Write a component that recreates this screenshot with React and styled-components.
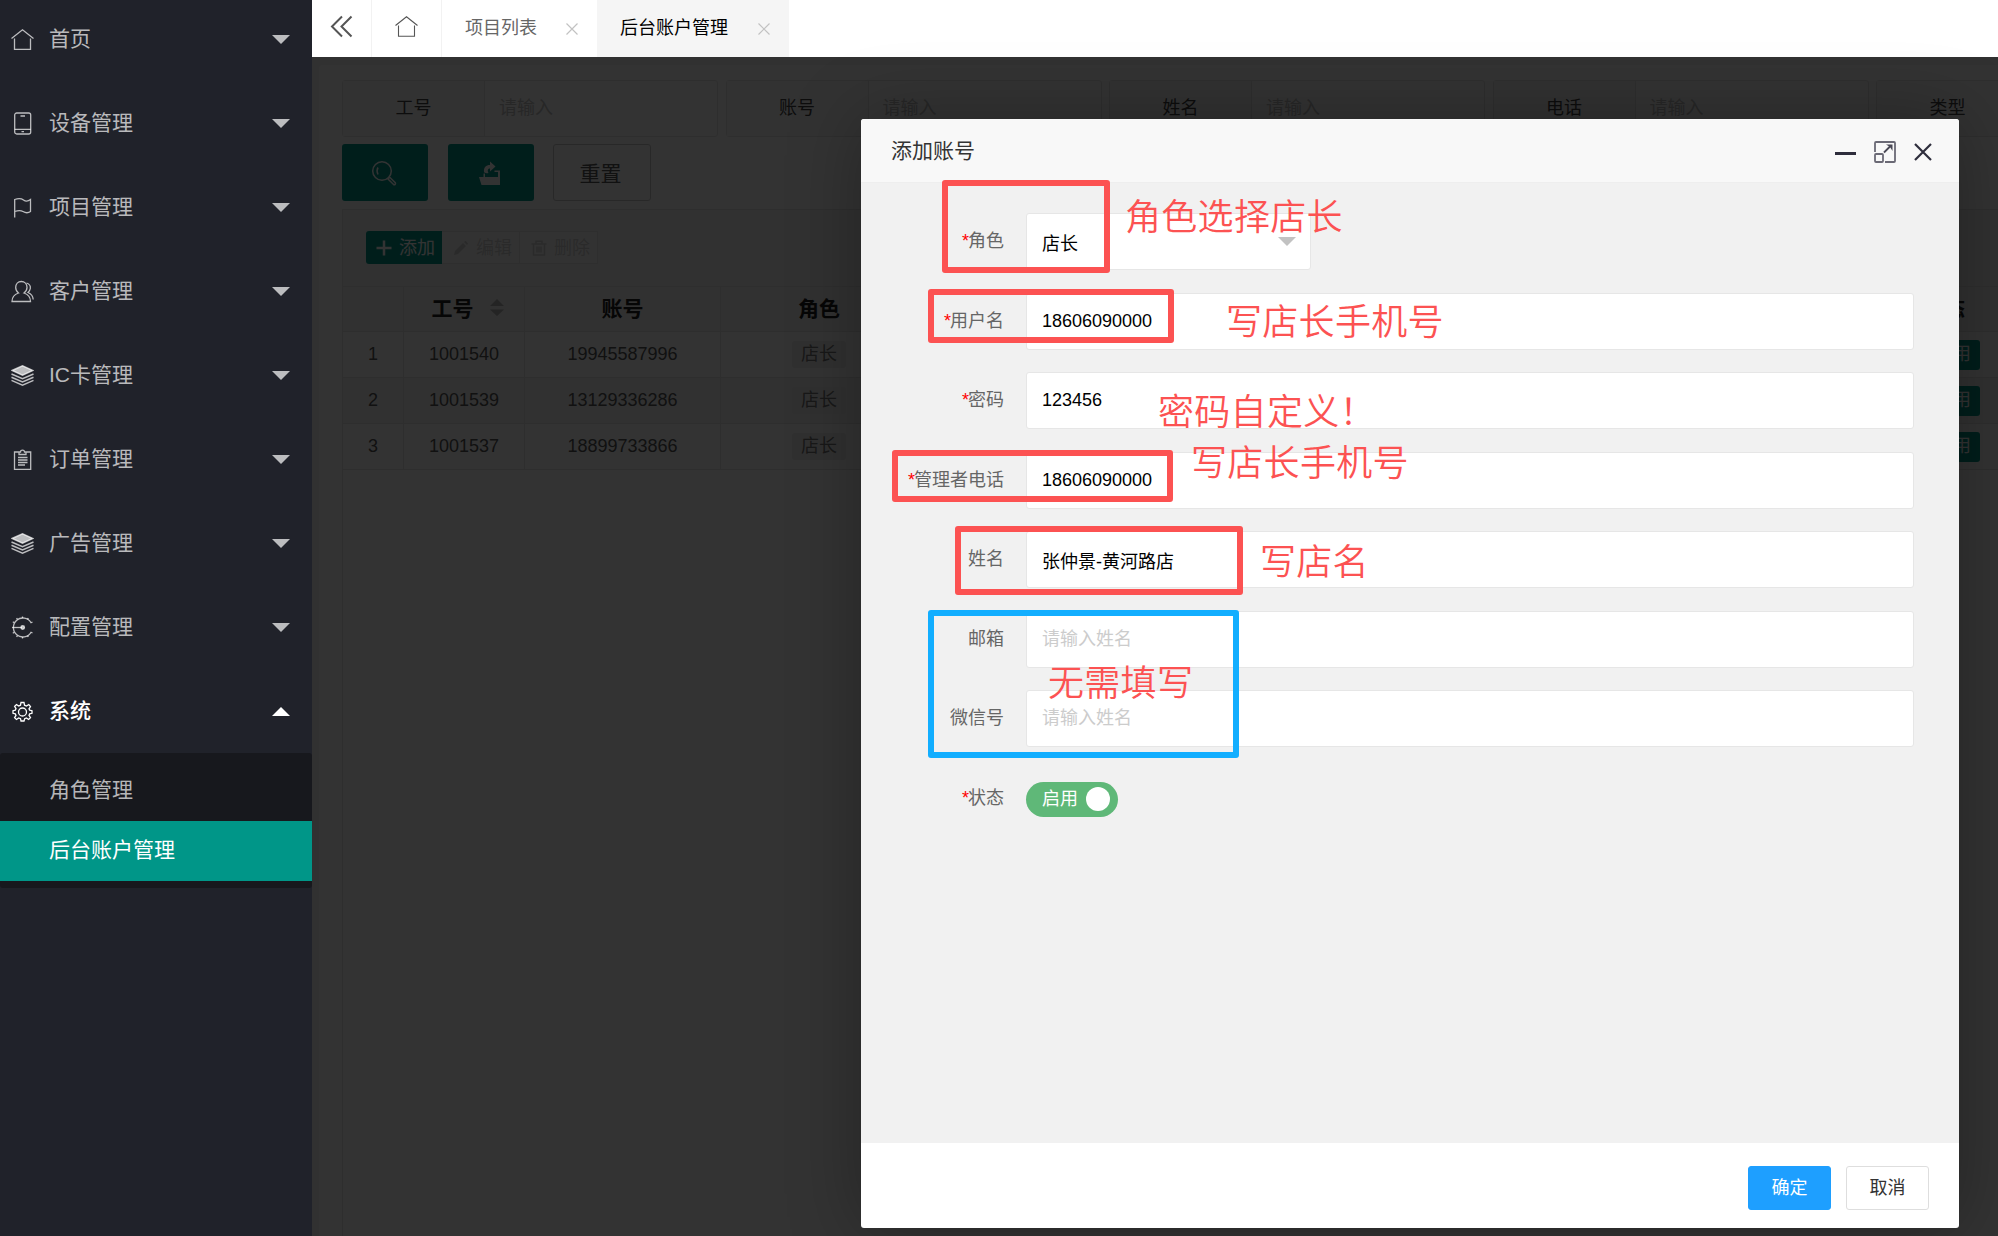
import React from "react";
import styled, { createGlobalStyle, css } from "styled-components";

const GlobalStyle = createGlobalStyle`
  * {
    box-sizing: border-box;
  }
  body {
    margin: 0;
    overflow: hidden;
    font-family: "Liberation Sans", "Noto Sans CJK SC", sans-serif;
    font-size: 18px;
  }
`;

const Layout = styled.div`
  display: flex;
  width: 1998px;
  height: 1236px;
  overflow: hidden;
  position: relative;
`;

/* ---------- sidebar ---------- */

const Sidebar = styled.aside`
  width: 312px;
  flex: none;
  background: #20222a;
`;

const NavList = styled.nav`
  margin-top: -3px;
`;

const NavItem = styled.div`
  display: flex;
  align-items: center;
  height: 84px;
  padding: 0 22px 0 11px;
  font-size: 21px;
  color: ${(p) => (p.$open ? "#fff" : "rgba(255, 255, 255, 0.7)")};
  font-weight: ${(p) => (p.$open ? 500 : 400)};

  svg {
    width: 23px;
    height: 23px;
    margin: 1px 15px 0 0;
  }
  span {
    flex: 1;
    line-height: 30px;
    padding-bottom: 1px;
  }
`;

const Caret = styled.i`
  border: 9px solid transparent;
  border-top-color: currentColor;
  margin-top: 10px;
  ${(p) =>
    p.$up &&
    css`
      border-top-color: transparent;
      border-bottom-color: currentColor;
      margin-top: -8px;
    `}
`;

const SubNav = styled.div`
  height: 135px;
  padding-top: 8px;
  background: #17181d;
  border-radius: 3px;
`;

const SubItem = styled.div`
  height: 60px;
  padding-left: 49px;
  line-height: 58px;
  font-size: 21px;
  color: ${(p) => (p.$active ? "#fff" : "rgba(255, 255, 255, 0.7)")};
  background: ${(p) => (p.$active ? "#009688" : "transparent")};
`;

/* ---------- tab bar ---------- */

const Main = styled.main`
  width: 1686px;
  display: flex;
  flex-direction: column;
`;

const TabBar = styled.header`
  display: flex;
  height: 57px;
  flex: none;
  background: #fff;
`;

const TabIcon = styled.div`
  display: flex;
  align-items: center;
  justify-content: center;
  width: ${(p) => p.$w}px;
  padding-bottom: 4px;
  border-right: 1px solid #f2f2f2;
  color: #555;
`;

const Tab = styled.div`
  display: flex;
  align-items: center;
  justify-content: space-between;
  width: ${(p) => p.$w}px;
  padding: 0 19px 6px 23px;
  color: ${(p) => (p.$active ? "#000" : "#666")};
  background: ${(p) => (p.$active ? "#f5f5f5" : "#fff")};

  svg {
    margin-top: 7px;
    color: #c2c2c2;
  }
`;

/* ---------- page under the shade ---------- */

const Page = styled.section`
  flex: 1;
  min-height: 0;
  padding: 8px 0 0 7px;
  background: #f2f2f2;
  position: relative;
  overflow: hidden;
`;

const Card = styled.div`
  width: 1800px;
  height: 1200px;
  padding: 15px 0 0 23px;
  background: #fff;
  border-radius: 3px;
`;

const SearchRow = styled.div`
  display: flex;
  gap: 7.5px;
`;

const SearchField = styled.div`
  display: flex;
  flex: none;
  width: 376px;
  height: 57px;
  line-height: 55px;
  border: 1px solid #e6e6e6;
  border-radius: 3px;
`;

const SearchLabel = styled.div`
  width: 142px;
  text-align: center;
  color: #444;
  background: #fafafa;
  border-right: 1px solid #e6e6e6;
`;

const SearchInput = styled.div`
  padding-left: 14px;
  color: #c2c2c2;
`;

const ButtonRow = styled.div`
  display: flex;
  gap: 19.5px;
  margin-top: 7px;
`;

const BigButton = styled.div`
  display: flex;
  align-items: center;
  justify-content: center;
  width: ${(p) => (p.$plain ? 98 : 86)}px;
  height: 57px;
  padding: 0 3px 2px 0;
  font-size: 21px;
  border-radius: 3px;
  color: ${(p) => (p.$plain ? "#555" : "#fff")};
  background: ${(p) => (p.$plain ? "#fff" : "#009688")};
  border: ${(p) => (p.$plain ? "1px solid #c9c9c9" : "none")};

  svg {
    margin-top: 3px;
  }
`;

const TableBox = styled.div`
  margin-top: 8px;
  height: 1100px;
  border: 1px solid #e6e6e6;
`;

const Toolbar = styled.div`
  display: flex;
  height: 76px;
  padding: 21px 0 0 23px;
  background: #f2f2f2;
`;

const ToolButton = styled.div`
  display: flex;
  align-items: center;
  gap: 7px;
  height: 33px;
  width: ${(p) => (p.$primary ? 76 : 78)}px;
  padding-left: ${(p) => (p.$primary ? 10 : 11)}px;
  padding-bottom: 4px;
  color: ${(p) => (p.$primary ? "#fff" : "#d2d2d2")};
  background: ${(p) => (p.$primary ? "#009688" : "#fbfbfb")};
  border: ${(p) => (p.$primary ? "none" : "1px solid #e6e6e6")};
  border-left: none;
  border-radius: ${(p) => (p.$primary ? "3px 0 0 3px" : 0)};

  svg {
    flex: none;
    margin-top: 4px;
  }
`;

const Row = styled.div`
  display: grid;
  grid-template-columns: 61px 121px 196px 197px 927px 199px 1fr;
  height: 46px;
  background: ${(p) => (p.$shaded ? "#f2f2f2" : "#fff")};
  border-bottom: 1px solid #e6e6e6;
  border-top: ${(p) => (p.$head ? "1px solid #e6e6e6" : "none")};
  font-size: ${(p) => (p.$head ? 21 : 18)}px;
  font-weight: ${(p) => (p.$head ? 700 : 400)};
  color: ${(p) => (p.$head ? "#222" : "#555")};
`;

const Cell = styled.div`
  display: flex;
  align-items: center;
  justify-content: center;
  gap: 16px;
  padding-bottom: ${(p) => p.$lift || 0}px;
  padding-left: ${(p) => p.$indent || 0}px;
  border-right: 1px solid #e6e6e6;
`;

const RoleBadge = styled.span`
  height: 27px;
  padding: 0 9px;
  line-height: 26px;
  color: #777;
  background: #f0f0f0;
  border-radius: 3px;
`;

const StateBadge = styled.span`
  width: 72px;
  height: 30px;
  padding-right: 9px;
  text-align: right;
  line-height: 29px;
  color: #fff;
  background: #009688;
  border-radius: 3px;
`;

const Shade = styled.div`
  position: absolute;
  inset: 0;
  background: rgba(0, 0, 0, 0.8);
`;

/* ---------- dialog ---------- */

const Dialog = styled.div`
  position: absolute;
  left: 861px;
  top: 119px;
  width: 1098px;
  height: 1109px;
  display: flex;
  flex-direction: column;
  background: #fff;
  border-radius: 3px;
  box-shadow: 1px 1px 75px rgba(0, 0, 0, 0.3);
`;

const DialogTitle = styled.div`
  display: flex;
  align-items: center;
  justify-content: space-between;
  height: 64px;
  padding: 0 27px 0 30px;
  font-size: 21px;
  color: #333;
  background: #f8f8f8;
  border-bottom: 1px solid #eee;
  border-radius: 3px 3px 0 0;

  span {
    padding-bottom: 4px;
  }
`;

const WindowTools = styled.div`
  display: flex;
  align-items: center;
  gap: 18px;
  padding-top: 3px;
  color: #2e2d3c;
`;

const Form = styled.div`
  flex: 1;
  display: flex;
  flex-direction: column;
  gap: 22.5px;
  padding: 30px 45px 0 0;
  background: #f1f1f1;
`;

const FormRow = styled.div`
  display: grid;
  grid-template-columns: 165px 1fr;
  height: 57px;
`;

const Label = styled.div`
  padding-right: 22px;
  text-align: right;
  line-height: 57px;
  color: #666;

  b {
    font-weight: 400;
    color: #f00;
    margin-right: -1px;
  }
`;

const Input = styled.div`
  display: flex;
  align-items: center;
  width: ${(p) => (p.$w ? `${p.$w}px` : "auto")};
  height: 57px;
  padding: ${(p) => p.$drop || 0}px 15px 0;
  line-height: 27px;
  justify-content: space-between;
  color: ${(p) => (p.$placeholder ? "#ccc" : "#000")};
  background: #fff;
  border: 1px solid #e6e6e6;
  border-radius: 3px;
`;

const SelectCaret = styled(Caret)`
  color: #c2c2c2;
  margin: 3px -1px 0 0;
`;

const Switch = styled.div`
  display: flex;
  align-items: center;
  justify-content: space-between;
  width: 92px;
  height: 35px;
  margin-top: 12px;
  padding: 0 8px 0 16px;
  color: #fff;
  background: #5fb878;
  border-radius: 18px;

  span {
    line-height: 32px;
    padding-bottom: 1px;
  }
`;

const Knob = styled.i`
  width: 24px;
  height: 24px;
  border-radius: 50%;
  background: #fff;
`;

const Footer = styled.div`
  display: flex;
  justify-content: flex-end;
  gap: 15px;
  height: 85px;
  padding: 23px 30px 0 0;
`;

const FooterButton = styled.div`
  width: 83px;
  height: 44px;
  line-height: 42px;
  text-align: center;
  color: ${(p) => (p.$primary ? "#fff" : "#333")};
  background: ${(p) => (p.$primary ? "#1e9fff" : "#fff")};
  border: 1px solid ${(p) => (p.$primary ? "#1e9fff" : "#dedede")};
  border-radius: 3px;
`;

/* ---------- marks drawn over the dialog ---------- */

const MarkBox = styled.div`
  position: absolute;
  left: ${(p) => p.$x}px;
  top: ${(p) => p.$y}px;
  width: ${(p) => p.$w}px;
  height: ${(p) => p.$h}px;
  border: 6px solid ${(p) => p.$color || "#fc5252"};
  border-radius: 3px;
`;

const MarkText = styled.div`
  position: absolute;
  left: ${(p) => p.$x}px;
  top: ${(p) => p.$y - 29}px;
  line-height: 54px;
  font-size: 36px;
  letter-spacing: 0.3px;
  font-family: "Noto Sans CJK SC", sans-serif;
  font-weight: 350;
  white-space: nowrap;
  color: #fc5252;
`;

/* ---------- icons ---------- */

const Svg = ({ size = 23, children, sw = 1.3 }) => (
  <svg
    width={size}
    height={size}
    viewBox="0 0 23 23"
    fill="none"
    stroke="currentColor"
    strokeWidth={sw}
  >
    {children}
  </svg>
);

const HomeIcon = ({ sw }) => (
  <Svg sw={sw}>
    <path d="M0.5 10.5L11.5 1.8L22.5 10.5M3.5 10.5V21.3H19.5V10.5" />
  </Svg>
);

const PhoneIcon = () => (
  <Svg>
    <rect x="3.7" y="1" width="16" height="21" rx="2" />
    <path d="M3.7 17.3H19.7M9.5 4H14M10.5 19.7H13" />
  </Svg>
);

const FlagIcon = () => (
  <Svg>
    <path d="M3.7 21.5V3.5C8 2 10.5 2.5 12.5 4S17 5.5 19.5 3.5V15.5C17 17.3 14.5 17 12 15.5S7 14.3 3.7 15.5" />
  </Svg>
);

const UsersIcon = () => (
  <Svg>
    <path d="M1 21.5C1 17.5 3 14.5 7.5 13C5.5 11.5 4.7 9.5 4.7 7.5C4.7 4 7 1.5 10.3 1.5S16 4 16 7.5C16 9.5 15 11.5 13 13C17.5 14.5 19.5 17.5 19.5 21.5Z" />
    <path d="M15.5 3C18.5 4 19.7 6 19.3 8.5C19.1 10 18.3 11.3 17 12.5C20.5 14 22 16.5 22.2 19.5" />
  </Svg>
);

const LayersIcon = () => (
  <Svg sw={1.5}>
    <path d="M1 6.5L11.5 1.8L22 6.5L11.5 11.2Z" fill="currentColor" />
    <path d="M0.5 10L11.5 14.7L22.5 10M0.5 13.2L11.5 17.9L22.5 13.2M0.5 16.4L11.5 21.1L22.5 16.4" />
  </Svg>
);

const OrderIcon = () => (
  <Svg>
    <path d="M8 4H3.5V21.3H19.7V4H15M8 6.5V4H9.5C9.5 1.5 13.5 1.5 13.5 4H15V6.5Z" />
    <path d="M7 9.5H16.5M7 12H16.5M7 14.5H16.5M7 17H14" />
  </Svg>
);

const ConfigIcon = () => (
  <Svg>
    <path d="M20 6.5A9.5 9.5 0 1 0 20 16.5" />
    <path d="M1 11.5H11" />
    <circle cx="11.7" cy="11.5" r="1.8" fill="currentColor" />
    <path d="M11.5 2V0.5M6.5 3.3L5.6 2M3.2 6.7L1.8 5.8M3.2 16.3L1.8 17.2M6.5 19.7L5.6 21M11.5 21V22.5M16.5 3.3L17.3 2M16.5 19.7L17.3 21M19.5 7L21.5 6M19.5 16L21.5 17" />
  </Svg>
);

const GearIcon = () => (
  <Svg>
    <path d="M10 2.5H13L13.5 5.2L15.5 6L17.8 4.5L19.5 6.5L18 8.8L18.7 10.2L21 10.7V13.3L18.7 13.8L18 15.4L19.5 17.6L17.6 19.5L15.4 18L13.7 18.7L13 21H10L9.5 18.7L7.7 18L5.5 19.5L3.6 17.6L5 15.4L4.3 13.8L2 13.3V10.7L4.3 10.2L5 8.6L3.6 6.4L5.5 4.5L7.7 6L9.5 5.2Z" />
    <circle cx="11.5" cy="12" r="4" />
  </Svg>
);

const CollapseIcon = () => (
  <Svg sw={2}>
    <path d="M12 1.5L2 11.5L12 21.5M21.5 1.5L11.5 11.5L21.5 21.5" />
  </Svg>
);

const CloseIcon = () => (
  <svg width="12" height="12" viewBox="0 0 12 12" stroke="currentColor" strokeWidth="1.2">
    <path d="M0.5 0.5L11.5 11.5M11.5 0.5L0.5 11.5" />
  </svg>
);

const SearchIcon = () => (
  <svg width="26" height="26" viewBox="0 0 26 26" fill="none" stroke="currentColor" strokeWidth="1.5">
    <circle cx="11" cy="11" r="9.3" />
    <path d="M7 7.5C5.8 9.5 5.8 12 7 14.5" />
    <path d="M17 19L18.7 17.3L24.3 22.7C25 24 23.8 25.2 22.5 24.5Z" />
  </svg>
);

const ExportIcon = () => (
  <svg width="23" height="25" viewBox="0 0 23 25" fill="currentColor">
    <path d="M1 16H5.5V12.5H7V16H20V11H16.5V9.5H22V24H3.5Z" />
    <path d="M6 11C5.5 6.5 8 4 12 4V0.5L17.5 5.5L12 10.5V7.5C10 7.5 9 9 10.5 12C8 12.5 6.5 12 6 11Z" />
  </svg>
);

const PlusIcon = () => (
  <svg width="16" height="16" viewBox="0 0 16 16" stroke="currentColor" strokeWidth="2.5">
    <path d="M8 0.5V15.5M0.5 8H15.5" />
  </svg>
);

const PenIcon = () => (
  <svg width="16" height="16" viewBox="0 0 16 16" fill="currentColor">
    <path d="M1 15L2 11L10 3L13 6L5 14ZM11 2L12.5 0.8L15.2 3.5L14 5Z" />
  </svg>
);

const TrashIcon = () => (
  <svg width="16" height="16" viewBox="0 0 16 16" fill="none" stroke="currentColor" strokeWidth="1.5">
    <path d="M0.5 4H15.5M5 4V1.2H11V4M2.5 4V15H13.5V4M6 6.5V12.5M8 6.5V12.5M10 6.5V12.5" />
  </svg>
);

const SortIcon = () => (
  <svg width="14" height="17" viewBox="0 0 14 17" fill="#b2b2b2">
    <path d="M0 7L7 0L14 7ZM0 10.5H14L7 17Z" />
  </svg>
);

const MinIcon = () => (
  <svg width="21" height="21" viewBox="0 0 21 21">
    <path d="M0 11.5H21" stroke="currentColor" strokeWidth="3" />
  </svg>
);

const MaxIcon = () => (
  <svg width="22" height="22" viewBox="0 0 22 22" fill="none" stroke="#6a6975" strokeWidth="1.8">
    <path d="M1 11V2Q1 1 2 1H20Q21 1 21 2V20Q21 21 20 21H11" />
    <rect x="1" y="13" width="8" height="8" rx="1" />
    <path d="M10 11.5L17 4.5" stroke="#4a4956" />
    <path d="M12 3.5H18.5V10L16 6Z" fill="#4a4956" stroke="none" />
  </svg>
);

const DialogCloseIcon = () => (
  <svg width="18" height="18" viewBox="0 0 18 18" stroke="currentColor" strokeWidth="2.2">
    <path d="M1 1L17 17M17 1L1 17" />
  </svg>
);

/* ---------- data ---------- */

const navItems = [
  { text: "首页", icon: <HomeIcon /> },
  { text: "设备管理", icon: <PhoneIcon /> },
  { text: "项目管理", icon: <FlagIcon /> },
  { text: "客户管理", icon: <UsersIcon /> },
  { text: "IC卡管理", icon: <LayersIcon /> },
  { text: "订单管理", icon: <OrderIcon /> },
  { text: "广告管理", icon: <LayersIcon /> },
  { text: "配置管理", icon: <ConfigIcon /> },
  { text: "系统", icon: <GearIcon />, open: true },
];

const searchFields = ["工号", "账号", "姓名", "电话"];

const accounts = [
  { id: "1001540", account: "19945587996" },
  { id: "1001539", account: "13129336286" },
  { id: "1001537", account: "18899733866" },
];

const formRows = [
  { label: "用户名", required: true, value: "18606090000" },
  { label: "密码", required: true, value: "123456" },
  { label: "管理者电话", required: true, value: "18606090000" },
  { label: "姓名", value: "张仲景-黄河路店", drop: 5 },
  { label: "邮箱", placeholder: "请输入姓名" },
  { label: "微信号", placeholder: "请输入姓名" },
];

function AccountTable() {
  return (
    <TableBox>
      <Toolbar>
        <ToolButton $primary>
          <PlusIcon />
          添加
        </ToolButton>
        <ToolButton>
          <PenIcon />
          编辑
        </ToolButton>
        <ToolButton>
          <TrashIcon />
          删除
        </ToolButton>
      </Toolbar>
      <Row $head $shaded>
        <Cell />
        <Cell $lift={4} $indent={7}>
          工号
          <SortIcon />
        </Cell>
        <Cell $lift={4}>账号</Cell>
        <Cell $lift={4}>角色</Cell>
        <Cell />
        <Cell $lift={4}>状态</Cell>
      </Row>
      {accounts.map((row, i) => (
        <Row key={row.id} $shaded={i % 2 === 1}>
          <Cell>{i + 1}</Cell>
          <Cell>{row.id}</Cell>
          <Cell>{row.account}</Cell>
          <Cell>
            <RoleBadge>店长</RoleBadge>
          </Cell>
          <Cell />
          <Cell>
            <StateBadge>启用</StateBadge>
          </Cell>
        </Row>
      ))}
    </TableBox>
  );
}

function AccountDialog() {
  return (
    <Dialog>
      <DialogTitle>
        <span>添加账号</span>
        <WindowTools>
          <MinIcon />
          <MaxIcon />
          <DialogCloseIcon />
        </WindowTools>
      </DialogTitle>
      <Form>
        <FormRow>
          <Label>
            <b>*</b>角色
          </Label>
          <Input $w={285} $drop={5}>
            店长
            <SelectCaret />
          </Input>
        </FormRow>
        {formRows.map((row) => (
          <FormRow key={row.label}>
            <Label>
              {row.required && <b>*</b>}
              {row.label}
            </Label>
            <Input $placeholder={!row.value} $drop={row.drop}>
              {row.value || row.placeholder}
            </Input>
          </FormRow>
        ))}
        <FormRow>
          <Label>
            <b>*</b>状态
          </Label>
          <Switch>
            <span>启用</span>
            <Knob />
          </Switch>
        </FormRow>
      </Form>
      <Footer>
        <FooterButton $primary>确定</FooterButton>
        <FooterButton>取消</FooterButton>
      </Footer>
    </Dialog>
  );
}

function Marks() {
  return (
    <>
      <MarkBox $x={942} $y={180} $w={168} $h={93} />
      <MarkBox $x={928} $y={289} $w={246} $h={54} />
      <MarkBox $x={892} $y={450} $w={281} $h={52} />
      <MarkBox $x={955} $y={526} $w={288} $h={69} />
      <MarkBox $x={928} $y={610} $w={311} $h={148} $color="#12aeff" />
      <MarkText $x={1125} $y={216}>角色选择店长</MarkText>
      <MarkText $x={1226} $y={321}>写店长手机号</MarkText>
      <MarkText $x={1158} $y={411}>密码自定义！</MarkText>
      <MarkText $x={1191} $y={462}>写店长手机号</MarkText>
      <MarkText $x={1260} $y={561}>写店名</MarkText>
      <MarkText $x={1048} $y={682}>无需填写</MarkText>
    </>
  );
}

function App() {
  return (
    <Layout>
      <GlobalStyle />
      <Sidebar>
        <NavList>
          {navItems.map((item) => (
            <NavItem key={item.text} $open={item.open}>
              {item.icon}
              <span>{item.text}</span>
              <Caret $up={item.open} />
            </NavItem>
          ))}
          <SubNav>
            <SubItem>角色管理</SubItem>
            <SubItem $active>后台账户管理</SubItem>
          </SubNav>
        </NavList>
      </Sidebar>
      <Main>
        <TabBar>
          <TabIcon $w={60}>
            <CollapseIcon />
          </TabIcon>
          <TabIcon $w={70}>
            <HomeIcon sw={1.1} />
          </TabIcon>
          <Tab $w={155}>
            项目列表
            <CloseIcon />
          </Tab>
          <Tab $w={192} $active>
            后台账户管理
            <CloseIcon />
          </Tab>
        </TabBar>
        <Page>
          <Card>
            <SearchRow>
              {searchFields.map((name) => (
                <SearchField key={name}>
                  <SearchLabel>{name}</SearchLabel>
                  <SearchInput>请输入</SearchInput>
                </SearchField>
              ))}
              <SearchField>
                <SearchLabel>类型</SearchLabel>
              </SearchField>
            </SearchRow>
            <ButtonRow>
              <BigButton>
                <SearchIcon />
              </BigButton>
              <BigButton>
                <ExportIcon />
              </BigButton>
              <BigButton $plain>重置</BigButton>
            </ButtonRow>
            <AccountTable />
          </Card>
          <Shade />
        </Page>
      </Main>
      <AccountDialog />
      <Marks />
    </Layout>
  );
}

export default App;
